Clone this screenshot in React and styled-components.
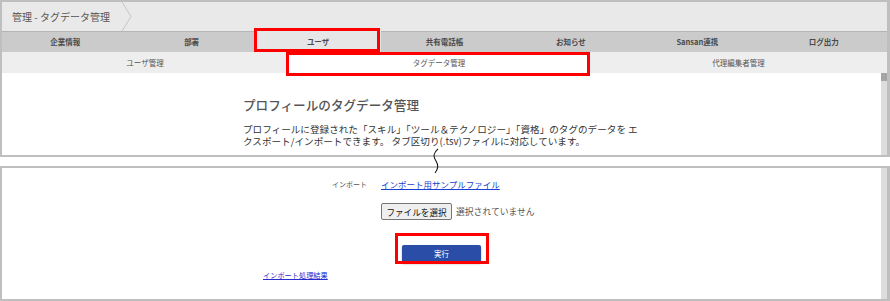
import React from "react";
import styled, { createGlobalStyle } from "styled-components";

const Global = createGlobalStyle`
  html, body { margin: 0; padding: 0; background: #fff; }
  body { font-family: "Noto Sans CJK JP", "Noto Sans", "Liberation Sans", sans-serif; }
`;

const Frame = styled.div`
  position: relative;
  width: 890px;
  height: 301px;
  display: flex;
  flex-direction: column;
  overflow: hidden;
`;

const Panel = styled.div`
  box-sizing: border-box;
  height: ${(p) => p.$h}px;
  border-style: solid;
  border-color: #bfbfbf;
  border-width: 2px 3px 2px 2px;
  display: flex;
  flex-direction: column;
`;

const Gap = styled.div`
  height: 9px;
  flex: none;
`;

const Header = styled.div`
  height: 29px;
  background: #e9e9e9;
  display: flex;
  align-items: center;
  flex: none;
`;

const Title = styled.span`
  font-size: 10px;
  color: #555;
  padding-left: 10px;
  width: 109px;
  white-space: nowrap;
`;

const Nav = styled.div`
  height: 21px;
  display: grid;
  grid-template-columns: repeat(7, 1fr);
  background: #cbcbcb;
  box-shadow: inset 0 1px 0 #b5b5b5;
  flex: none;
`;

const NavItem = styled.div`
  display: flex;
  align-items: center;
  justify-content: center;
  font-size: 7.5px;
  font-weight: 700;
  color: #4a4a4a;
  background: ${(p) => (p.$active ? "#e6e6e6" : "transparent")};
`;

const SubNav = styled.div`
  height: 21px;
  display: grid;
  grid-template-columns: 286px 302px 1fr;
  background: #eeeeee;
  flex: none;
`;

const SubItem = styled.div`
  display: flex;
  align-items: center;
  justify-content: center;
  font-size: 7.5px;
  color: #555;
  background: ${(p) => (p.$active ? "#fff" : "transparent")};
`;

const BodyRow = styled.div`
  flex: 1;
  display: flex;
  min-height: 0;
`;

const Content = styled.div`
  flex: 1;
  background: #fff;
  overflow: hidden;
`;

const Track = styled.div`
  width: 6px;
  background: #dddddd;
  display: flex;
  flex-direction: column;
`;

const Thumb = styled.div`
  height: 8px;
  background: #a5a5a5;
`;

const Heading = styled.h2`
  margin: 24px 0 0 241px;
  font-size: 12.6px;
  line-height: 16px;
  font-weight: 500;
  color: #555;
`;

const Para = styled.div`
  margin: 10px 0 0 241px;
  font-size: 9.6px;
  color: #333;
  white-space: nowrap;
`;

const ParaLine = styled.div`
  height: 12px;
  line-height: 12px;
`;

const Form = styled.div`
  display: flex;
  flex-direction: column;
  align-items: flex-start;
`;

const ImportRow = styled.div`
  display: flex;
  align-items: center;
  margin: 10px 0 0 330px;
  height: 12px;
`;

const Label = styled.span`
  font-size: 7px;
  color: #555;
  width: 49px;
`;

const Link = styled.a`
  font-size: ${(p) => p.$size}px;
  color: ${(p) => p.$color || "#1a3fd1"};
  text-decoration: underline;
  cursor: pointer;
  white-space: nowrap;
`;

const FileRow = styled.div`
  display: flex;
  align-items: center;
  margin: 13px 0 0 379px;
  gap: 4px;
`;

const FileButton = styled.button`
  box-sizing: border-box;
  width: 71px;
  height: 17px;
  padding: 0;
  font-family: inherit;
  font-size: 8.6px;
  color: #111;
  background: #efefef;
  border: 1px solid #767676;
  border-radius: 2px;
`;

const FileNote = styled.span`
  font-size: 8.8px;
  color: #555;
`;

const ExecRow = styled.div`
  margin: 18px 0 0 400px;
`;

const ExecButton = styled.button`
  box-sizing: border-box;
  width: 79px;
  height: 18px;
  padding: 0;
  border: none;
  border-radius: 2px;
  background: #2a4ea8;
  color: #fff;
  font-family: inherit;
  font-size: 7.5px;
  box-shadow: 0 1px 2px rgba(0, 0, 0, 0.35);
`;

const ResultRow = styled.div`
  margin: 3px 0 0 261px;
  line-height: 10px;
`;

const Highlight = styled.div`
  position: absolute;
  box-sizing: border-box;
  border: 3px solid #ff0000;
  left: ${(p) => p.$x}px;
  top: ${(p) => p.$y}px;
  width: ${(p) => p.$w}px;
  height: ${(p) => p.$h}px;
  pointer-events: none;
`;

const Break = styled.svg`
  position: absolute;
  left: 428px;
  top: 148px;
`;

const navItems = ["企業情報", "部署", "ユーザ", "共有電話帳", "お知らせ", "Sansan連携", "ログ出力"];
const subItems = ["ユーザ管理", "タグデータ管理", "代理編集者管理"];

export default function App() {
  return (
    <>
      <Global />
      <Frame>
        <Panel $h={157}>
          <Header>
            <Title>管理 - タグデータ管理</Title>
            <svg width="12" height="29" viewBox="0 0 12 29">
              <polyline points="1,0 10,14.5 1,29" fill="none" stroke="#c6c6c6" strokeWidth="1" />
            </svg>
          </Header>
          <Nav>
            {navItems.map((n) => (
              <NavItem key={n} $active={n === "ユーザ"}>{n}</NavItem>
            ))}
          </Nav>
          <SubNav>
            {subItems.map((n) => (
              <SubItem key={n} $active={n === "タグデータ管理"}>{n}</SubItem>
            ))}
          </SubNav>
          <BodyRow>
            <Content>
              <Heading>プロフィールのタグデータ管理</Heading>
              <Para>
                <ParaLine>プロフィールに登録された「スキル」「ツール＆テクノロジー」「資格」のタグのデータを エ</ParaLine>
                <ParaLine>クスポート/インポートできます。 タブ区切り(.tsv)ファイルに対応しています。</ParaLine>
              </Para>
            </Content>
            <Track>
              <Thumb />
            </Track>
          </BodyRow>
        </Panel>
        <Gap />
        <Panel $h={135}>
          <BodyRow>
            <Content>
              <Form>
                <ImportRow>
                  <Label>インポート</Label>
                  <Link $size={8.5}>インポート用サンプルファイル</Link>
                </ImportRow>
                <FileRow>
                  <FileButton type="button">ファイルを選択</FileButton>
                  <FileNote>選択されていません</FileNote>
                </FileRow>
                <ExecRow>
                  <ExecButton type="button">実行</ExecButton>
                </ExecRow>
                <ResultRow>
                  <Link $size={7.2} $color="#2a2ad0">インポート処理結果</Link>
                </ResultRow>
              </Form>
            </Content>
            <Track />
          </BodyRow>
        </Panel>
        <Break width="16" height="26" viewBox="0 0 16 26">
          <path d="M10 1 C 4 6, 6 10, 8 13 S 11 20, 7 25" fill="none" stroke="#111" strokeWidth="1.1" />
        </Break>
        <Highlight $x={254} $y={28} $w={126} $h={24} />
        <Highlight $x={286} $y={52} $w={304} $h={24} />
        <Highlight $x={395} $y={233} $w={94} $h={31} />
      </Frame>
    </>
  );
}
